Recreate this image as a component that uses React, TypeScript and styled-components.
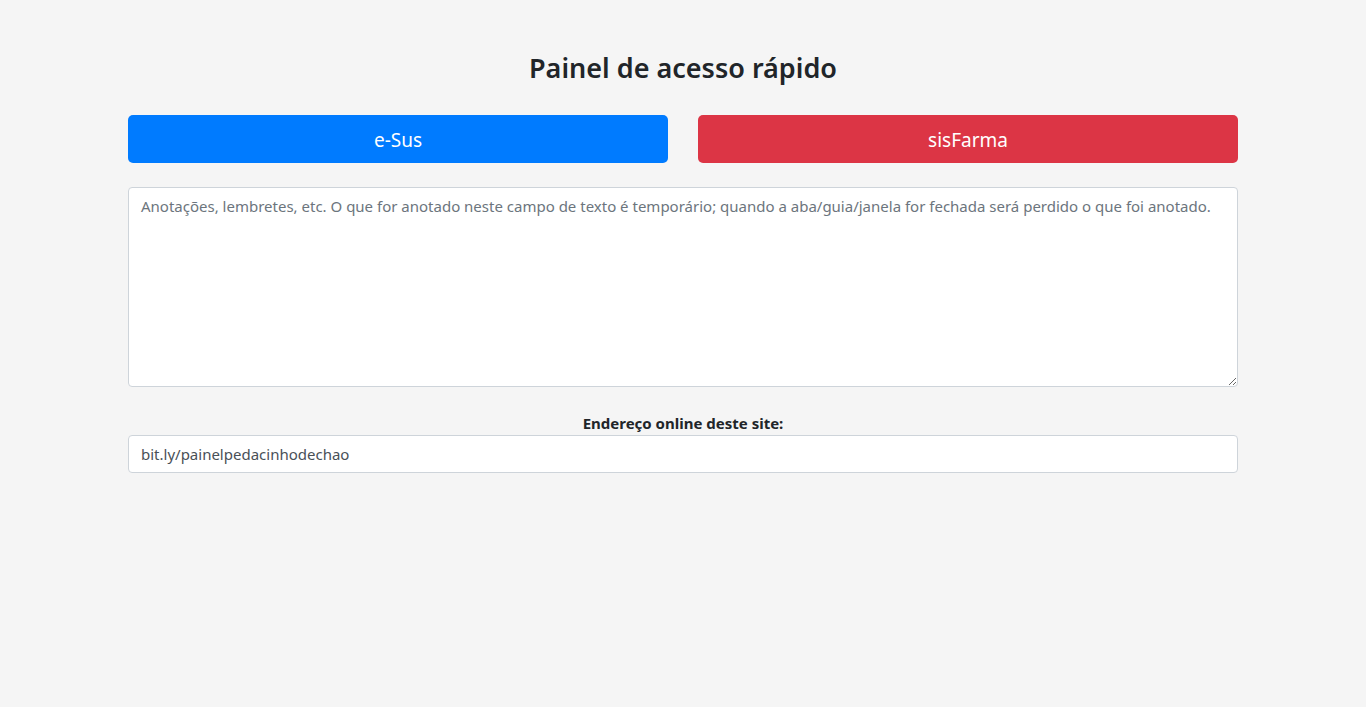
import React from 'react';
import styled, { createGlobalStyle } from 'styled-components';

const GlobalStyle = createGlobalStyle`
  *, *::before, *::after { box-sizing: border-box; }
  body {
    margin: 0;
    background: #f5f5f5;
    color: #212529;
    font-family: 'Segoe UI', 'Noto Sans', 'Open Sans', sans-serif;
    font-size: 15px;
    line-height: 24px;
  }
`;

const Container = styled.main`
  max-width: 1140px;
  margin: 0 auto;
  padding: 48px 15px;
`;

const Title = styled.h1`
  margin: 0 0 27px;
  font-size: 27px;
  font-weight: 600;
  line-height: 40px;
  text-align: center;
`;

const Shortcuts = styled.nav`
  display: grid;
  grid-template-columns: 1fr 1fr;
  gap: 30px;
  margin-bottom: 24px;
`;

const ShortcutButton = styled.button<{ $color: string }>`
  padding: 10px 16px 8px;
  border: 0;
  border-radius: 5px;
  background: ${({ $color }) => $color};
  color: #fff;
  font-family: inherit;
  font-size: 19px;
  line-height: 30px;
  cursor: pointer;
`;

const Notes = styled.textarea`
  display: block;
  width: 100%;
  height: 200px;
  margin-bottom: 24px;
  padding: 6px 12px;
  border: 1px solid #ced4da;
  border-radius: 4px;
  background: #fff;
  color: #495057;
  font: inherit;
  resize: vertical;

  &::placeholder { color: #6c757d; opacity: 1; }
`;

const AddressLabel = styled.label`
  display: block;
  font-weight: 700;
  text-align: center;
`;

const AddressInput = styled.input`
  display: block;
  width: 100%;
  height: 38px;
  padding: 6px 12px;
  border: 1px solid #ced4da;
  border-radius: 4px;
  background: #fff;
  color: #495057;
  font: inherit;
`;

export default function App() {
  return (
    <>
      <GlobalStyle />
      <Container>
        <Title>Painel de acesso rápido</Title>
        <Shortcuts>
          <ShortcutButton type="button" $color="#007bff">e-Sus</ShortcutButton>
          <ShortcutButton type="button" $color="#dc3545">sisFarma</ShortcutButton>
        </Shortcuts>
        <Notes
          aria-label="Anotações"
          placeholder="Anotações, lembretes, etc. O que for anotado neste campo de texto é temporário; quando a aba/guia/janela for fechada será perdido o que foi anotado."
        />
        <AddressLabel htmlFor="address">Endereço online deste site:</AddressLabel>
        <AddressInput id="address" type="text" readOnly value="bit.ly/painelpedacinhodechao" />
      </Container>
    </>
  );
}
